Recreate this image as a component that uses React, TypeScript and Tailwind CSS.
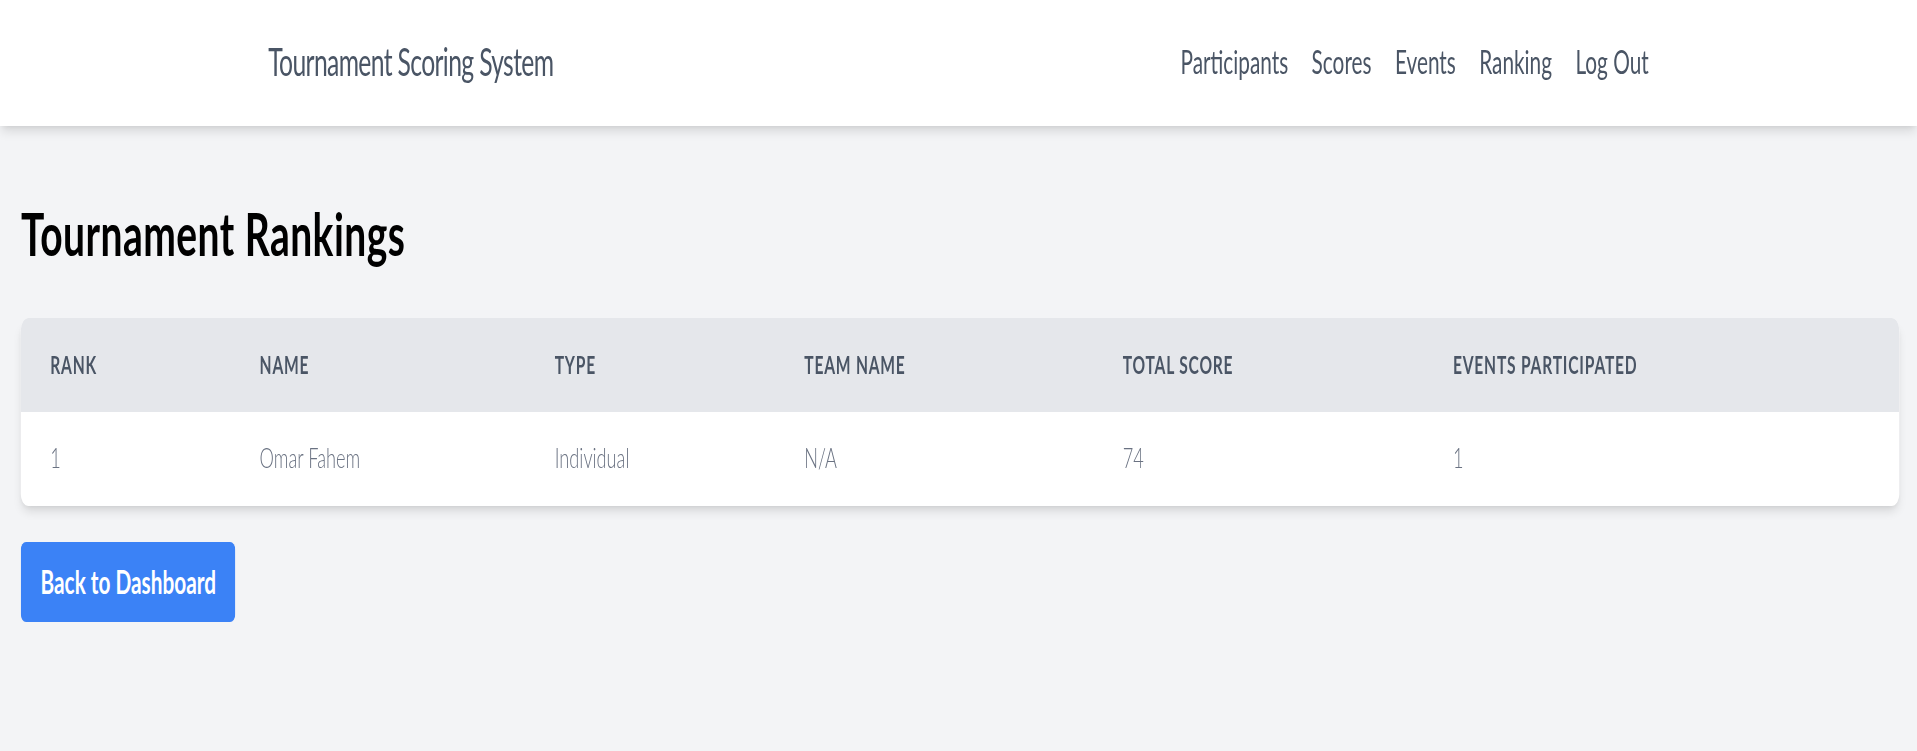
const rows = [
  { rank: 1, name: "Omar Fahem", type: "Individual", team: "N/A", total: 74, events: 1 },
];

const links = ["Participants", "Scores", "Events", "Ranking", "Log Out"];
const heads = ["Rank", "Name", "Type", "Team Name", "Total Score", "Events Participated"];

export default function App() {
  return (
    <div className="h-[751px] w-[1917px] overflow-hidden bg-gray-100 font-['Lato','Open_Sans',sans-serif]">
      {/* the capture is stretched: lay out at source size, then scale up */}
      <div className="h-[375.5px] w-[1474.6px] origin-top-left scale-x-[1.3] scale-y-[2]">
        <nav className="relative z-10 h-[62.5px] bg-white shadow-md">
          <div className="mx-auto flex h-full w-[1062px] items-center justify-between">
            <span className="text-[19px] tracking-[-0.5px] text-gray-600">Tournament Scoring System</span>
            <div className="flex items-center gap-[18px] text-base text-gray-600">
              {links.map((l) => (
                <a key={l} href="#">
                  {l}
                </a>
              ))}
            </div>
          </div>
        </nav>

        <main className="pl-[16.2px] pr-[13.8px] pt-[35.5px]">
          <h1 className="mb-[25px] text-3xl leading-9 font-bold tracking-[0.35px] text-black">Tournament Rankings</h1>

          <div className="overflow-hidden rounded-md bg-white shadow-md">
            <div className="grid h-[47px] grid-cols-[161px_227px_192px_245px_254px_1fr] items-center bg-gray-200">
              {heads.map((h) => (
                <div key={h} className="pl-[22.5px] text-xs font-bold tracking-wider text-gray-600 uppercase">
                  {h}
                </div>
              ))}
            </div>
            {rows.map((r) => (
              <div
                key={r.rank}
                className="grid h-[46.5px] grid-cols-[161px_227px_192px_245px_254px_1fr] items-center text-sm font-light text-gray-500"
              >
                <div className="pl-[22.5px]">{r.rank}</div>
                <div className="pl-[22.5px]">{r.name}</div>
                <div className="pl-[22.5px]">{r.type}</div>
                <div className="pl-[22.5px]">{r.team}</div>
                <div className="pl-[22.5px]">{r.total}</div>
                <div className="pl-[22.5px]">{r.events}</div>
              </div>
            ))}
          </div>

          <button
            type="button"
            className="mt-[18.5px] h-[40px] w-[165px] whitespace-nowrap rounded bg-[#3b82f6] text-base font-bold text-white"
          >
            Back to Dashboard
          </button>
        </main>
      </div>
    </div>
  );
}
